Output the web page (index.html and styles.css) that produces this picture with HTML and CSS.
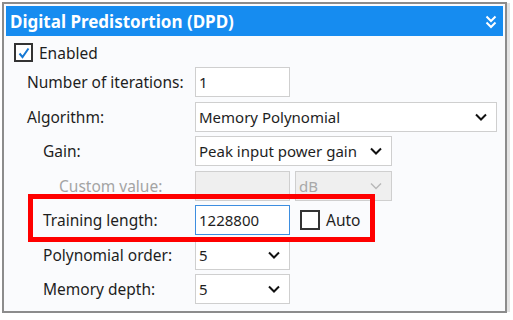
FILE: index.html
```html
<!DOCTYPE html>
<html lang="en">
<head>
    <meta charset="UTF-8">
    <title>Digital Predistortion (DPD)</title>
    <link rel="stylesheet" href="styles.css">
</head>
<body>
    <div class="panel">
        <div class="panel-header">
            <span class="panel-title">Digital Predistortion (DPD)</span>
            <svg class="collapse-icon" width="12" height="14" viewBox="0 0 12 14">
                <path d="M1.5 1.5 L6 6 L10.5 1.5 M1.5 7.5 L6 12 L10.5 7.5" fill="none" stroke="#fff" stroke-width="2"/>
            </svg>
        </div>

        <label class="check-row">
            <span class="checkbox checked">
                <svg width="14" height="14" viewBox="0 0 14 14">
                    <path d="M2.5 7.5 L5.5 11 L11.5 2.5" fill="none" stroke="#1679d4" stroke-width="2"/>
                </svg>
            </span>
            Enabled
        </label>

        <div class="form">
            <div class="label">Number of iterations:</div>
            <div class="controls">
                <div class="field w-small">1</div>
            </div>

            <div class="label">Algorithm:</div>
            <div class="controls">
                <div class="field select w-wide">Memory Polynomial
                    <svg class="chevron" width="12" height="8" viewBox="0 0 12 8"><path d="M1 1.5 L6 6.5 L11 1.5" fill="none" stroke="#111" stroke-width="2"/></svg>
                </div>
            </div>

            <div class="label indent-1">Gain:</div>
            <div class="controls">
                <div class="field select w-mid">Peak input power gain
                    <svg class="chevron" width="12" height="8" viewBox="0 0 12 8"><path d="M1 1.5 L6 6.5 L11 1.5" fill="none" stroke="#111" stroke-width="2"/></svg>
                </div>
            </div>

            <div class="label indent-2 disabled">Custom value:</div>
            <div class="controls">
                <div class="field w-small is-disabled"></div>
                <div class="field select w-unit is-disabled">dB
                    <svg class="chevron" width="12" height="8" viewBox="0 0 12 8"><path d="M1 1.5 L6 6.5 L11 1.5" fill="none" stroke="#b8b8b8" stroke-width="1.5"/></svg>
                </div>
            </div>

            <div class="label indent-1">Training length:</div>
            <div class="controls">
                <div class="field w-small focused">1228800</div>
                <label class="auto">
                    <span class="checkbox"></span>
                    Auto
                </label>
            </div>

            <div class="label indent-1">Polynomial order:</div>
            <div class="controls">
                <div class="field select w-small">5
                    <svg class="chevron" width="12" height="8" viewBox="0 0 12 8"><path d="M1 1.5 L6 6.5 L11 1.5" fill="none" stroke="#111" stroke-width="2"/></svg>
                </div>
            </div>

            <div class="label indent-1">Memory depth:</div>
            <div class="controls">
                <div class="field select w-small">5
                    <svg class="chevron" width="12" height="8" viewBox="0 0 12 8"><path d="M1 1.5 L6 6.5 L11 1.5" fill="none" stroke="#111" stroke-width="2"/></svg>
                </div>
            </div>
        </div>
    </div>

    <div class="highlight"></div>
</body>
</html>
```

FILE: styles.css
```css
body {
    margin: 0;
    background: #fff;
    font-family: 'Noto Sans', 'Open Sans', sans-serif;
    font-size: 15.5px;
    color: #1e1e1e;
    position: relative;
    width: 513px;
    height: 320px;
    overflow: hidden;
}

.panel {
    margin: 2px;
    width: 497px;
    height: 303px;
    border: 2px solid #8c8c8c;
    padding: 2px;
    box-sizing: content-box;
    background: #fafbfd;
    box-shadow: 4px 0 0 -1px #e4e4e4;
}

.panel-header {
    height: 30px;
    background: #168cf0;
    color: #fff;
    display: flex;
    align-items: center;
    justify-content: space-between;
    padding: 0 6px 0 4px;
}

.panel-title {
    font-weight: bold;
    font-size: 17px;
}

.collapse-icon {
    margin-top: 1px;
}

.check-row {
    display: flex;
    align-items: center;
    gap: 6px;
    height: 19px;
    margin: 7px 0 0 8px;
}

.checkbox {
    width: 15px;
    height: 15px;
    border: 2px solid #333;
    background: #fff;
    display: flex;
    align-items: center;
    justify-content: center;
}

.form {
    display: grid;
    grid-template-columns: 168px 1fr;
    row-gap: 4.5px;
    margin-top: 5px;
    padding-left: 21px;
}

.label {
    display: flex;
    align-items: center;
    height: 30px;
}

.indent-1 {
    padding-left: 16px;
}

.indent-2 {
    padding-left: 32px;
}

.disabled {
    color: #a4a4a4;
}

.controls {
    display: flex;
    align-items: center;
    gap: 5px;
}

.field {
    height: 30px;
    box-sizing: border-box;
    border: 1px solid #cfcfcf;
    background: #fff;
    display: flex;
    align-items: center;
    justify-content: space-between;
    padding: 0 9px 0 3px;
    font-size: 15px;
}

.w-small {
    width: 95px;
}

.w-wide {
    width: 302px;
}

.w-mid {
    width: 197px;
}

.w-unit {
    width: 97px;
}

.is-disabled {
    background: #efefef;
    color: #a8a8a8;
}

.focused {
    border-color: #3d8ee0;
}

.chevron {
    flex-shrink: 0;
}

.auto {
    display: flex;
    align-items: center;
    gap: 6px;
    margin-left: 5px;
}

.auto .checkbox {
    width: 16px;
    height: 16px;
}

.highlight {
    position: absolute;
    left: 28px;
    top: 194px;
    width: 337px;
    height: 38px;
    border: 5px solid #f00;
}
```
